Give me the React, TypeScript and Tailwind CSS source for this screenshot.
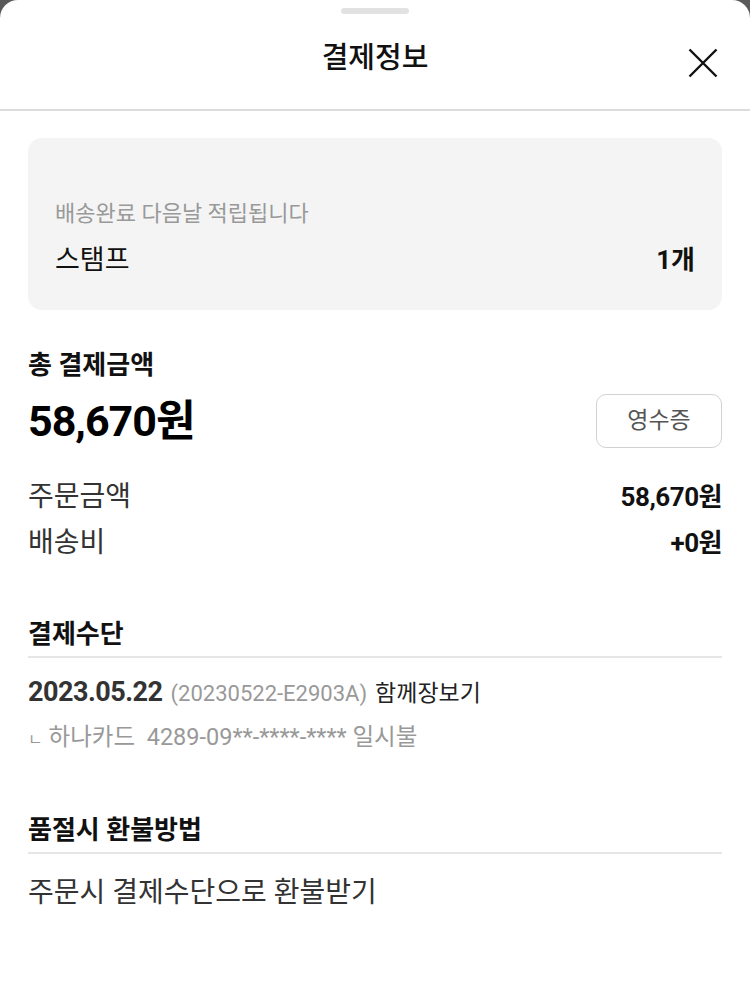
export default function App() {
  const font = { fontFamily: 'Roboto, "Noto Sans CJK KR", sans-serif' };

  return (
    <div className="min-h-[986px] w-[750px] bg-[#5a5a5a]" style={font}>
      <div className="min-h-[986px] w-full rounded-t-[18px] bg-white">
        {/* Handle */}
        <div className="flex justify-center pt-[8px]">
          <div className="h-[6px] w-[68px] rounded-full bg-[#e2e2e2]" />
        </div>

        {/* Header */}
        <div className="relative flex h-[97px] items-center justify-center border-b-2 border-[#dcdcdc] pb-[8px]">
          <h1 className="text-[29px] font-medium leading-[40px] text-[#111]">결제정보</h1>
          <button className="absolute right-[32px] top-[34px] h-[30px] w-[30px]">
            <svg viewBox="0 0 30 30" className="h-[30px] w-[30px]">
              <path d="M1.5 1.5 L28.5 28.5 M28.5 1.5 L1.5 28.5" stroke="#111" strokeWidth="2.4" fill="none" />
            </svg>
          </button>
        </div>

        <div className="px-[28px]">
          {/* Stamp box */}
          <div className="mt-[27px] flex h-[172px] flex-col justify-end rounded-[14px] bg-[#f4f4f4] px-[27px] pb-[34px]">
            <p className="text-[22px] leading-[28px] text-[#999]">배송완료 다음날 적립됩니다</p>
            <div className="mt-[16px] flex items-center justify-between">
              <span className="text-[27px] leading-[32px] text-[#111]">스탬프</span>
              <span className="text-[26px] font-bold leading-[32px] text-[#111]">1개</span>
            </div>
          </div>

          {/* Total */}
          <div className="mt-[39px]">
            <p className="text-[26px] font-semibold leading-[32px] text-[#111]">총 결제금액</p>
            <div className="mt-[13px] flex items-center justify-between">
              <span className="text-[43px] font-bold leading-[54px] tracking-[-1px] text-black">58,670원</span>
              <button className="h-[54px] w-[126px] rounded-[10px] border border-[#d2d2d2] text-[23px] text-[#555]">
                영수증
              </button>
            </div>
            <div className="mt-[33px] flex items-center justify-between">
              <span className="text-[28px] leading-[32px] text-[#333]">주문금액</span>
              <span className="text-[26px] font-bold leading-[32px] tracking-[-0.5px] text-[#111]">58,670원</span>
            </div>
            <div className="mt-[14px] flex items-center justify-between">
              <span className="text-[28px] leading-[32px] text-[#333]">배송비</span>
              <span className="text-[26px] font-bold leading-[32px] tracking-[-0.5px] text-[#111]">+0원</span>
            </div>
          </div>

          {/* Payment method */}
          <div className="mt-[59px]">
            <p className="border-b-2 border-[#e6e6e6] pb-[6px] text-[26px] font-semibold leading-[32px] text-[#111]">
              결제수단
            </p>
            <div className="mt-[18px] flex h-[32px] items-baseline gap-[8px]">
              <span className="text-[27px] font-bold leading-[32px] tracking-[-0.5px] text-[#333]">2023.05.22</span>
              <span className="text-[22px] leading-[32px] text-[#999]">(20230522-E2903A)</span>
              <span className="text-[23px] leading-[32px] text-[#222]">함께장보기</span>
            </div>
            <p className="mt-[14px] text-[23.5px] leading-[30px] text-[#999]">
              <span className="text-[16px]">ㄴ</span> 하나카드&nbsp; 4289-09**-****-**** 일시불
            </p>
          </div>

          {/* Refund */}
          <div className="mt-[59px]">
            <p className="border-b-2 border-[#e6e6e6] pb-[6px] text-[26px] font-semibold leading-[32px] text-[#111]">
              품절시 환불방법
            </p>
            <p className="mt-[23px] text-[28px] leading-[32px] text-[#333]">주문시 결제수단으로 환불받기</p>
          </div>
        </div>
      </div>
    </div>
  );
}
